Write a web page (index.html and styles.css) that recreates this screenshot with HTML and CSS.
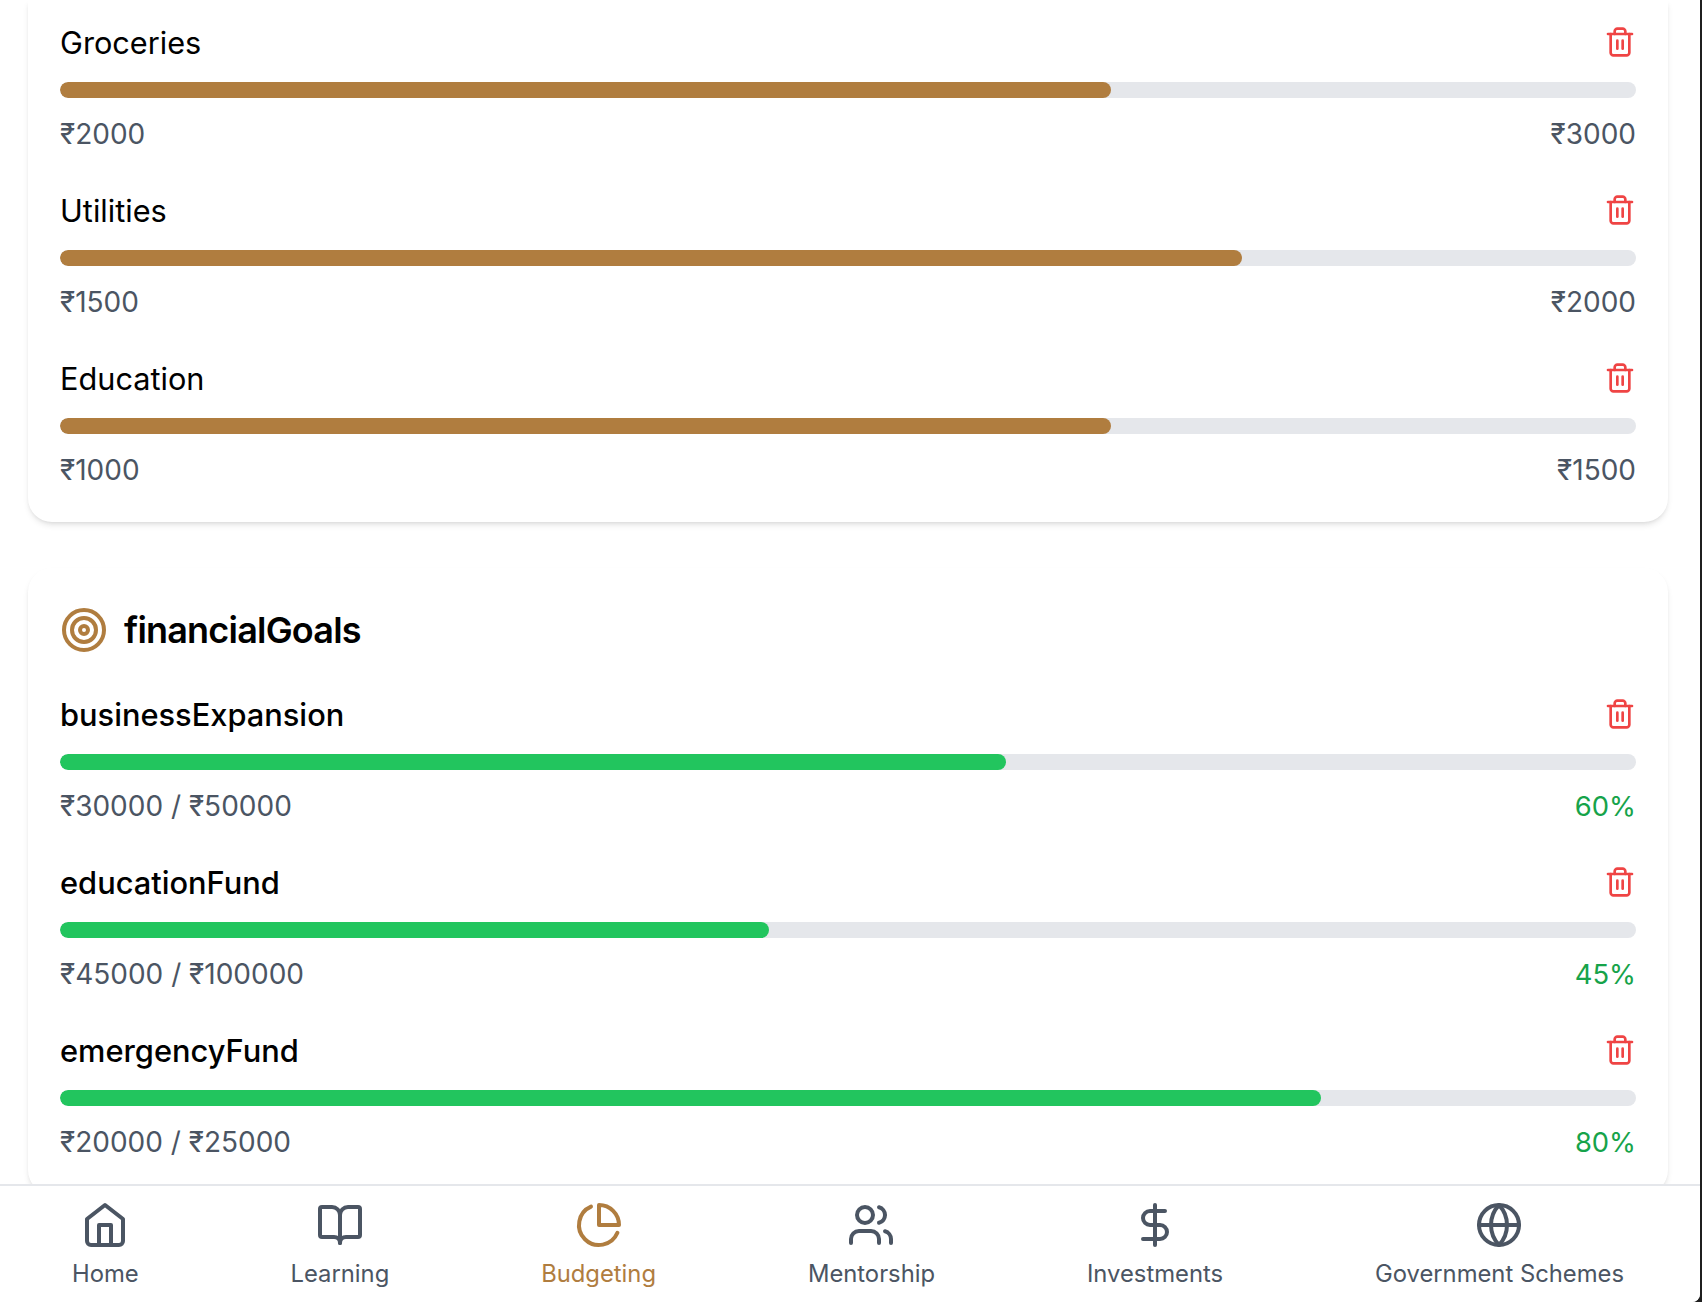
FILE: index.html
```html
<!DOCTYPE html>
<html lang="en">
<head>
    <meta charset="UTF-8">
    <meta name="viewport" content="width=device-width, initial-scale=1.0">
    <title>Budgeting</title>
    <link rel="stylesheet" href="styles.css">
</head>
<body>
    <svg class="sprite" aria-hidden="true">
        <symbol id="trash" viewBox="0 0 24 24"><path d="M3 6h18"/><path d="M19 6v14c0 1-1 2-2 2H7c-1 0-2-1-2-2V6"/><path d="M8 6V4c0-1 1-2 2-2h4c1 0 2 1 2 2v2"/><line x1="10" y1="11" x2="10" y2="17"/><line x1="14" y1="11" x2="14" y2="17"/></symbol>
    </svg>

    <div class="app">
        <main class="content">
            <section class="card card-top">
                <div class="item">
                    <div class="item-head"><span class="item-name">Groceries</span><svg class="trash"><use href="#trash"/></svg></div>
                    <div class="track"><div class="fill fill-brown" style="width: 66.67%"></div></div>
                    <div class="item-foot"><span>₹2000</span><span>₹3000</span></div>
                </div>
                <div class="item">
                    <div class="item-head"><span class="item-name">Utilities</span><svg class="trash"><use href="#trash"/></svg></div>
                    <div class="track"><div class="fill fill-brown" style="width: 75%"></div></div>
                    <div class="item-foot"><span>₹1500</span><span>₹2000</span></div>
                </div>
                <div class="item">
                    <div class="item-head"><span class="item-name">Education</span><svg class="trash"><use href="#trash"/></svg></div>
                    <div class="track"><div class="fill fill-brown" style="width: 66.67%"></div></div>
                    <div class="item-foot"><span>₹1000</span><span>₹1500</span></div>
                </div>
            </section>

            <section class="card">
                <h2 class="card-title">
                    <svg class="title-icon" viewBox="0 0 24 24"><circle cx="12" cy="12" r="10"/><circle cx="12" cy="12" r="6"/><circle cx="12" cy="12" r="2"/></svg>
                    financialGoals
                </h2>
                <div class="item">
                    <div class="item-head"><span class="item-name goal">businessExpansion</span><svg class="trash"><use href="#trash"/></svg></div>
                    <div class="track"><div class="fill fill-green" style="width: 60%"></div></div>
                    <div class="item-foot"><span>₹30000 / ₹50000</span><span class="percent">60%</span></div>
                </div>
                <div class="item">
                    <div class="item-head"><span class="item-name goal">educationFund</span><svg class="trash"><use href="#trash"/></svg></div>
                    <div class="track"><div class="fill fill-green" style="width: 45%"></div></div>
                    <div class="item-foot"><span>₹45000 / ₹100000</span><span class="percent">45%</span></div>
                </div>
                <div class="item">
                    <div class="item-head"><span class="item-name goal">emergencyFund</span><svg class="trash"><use href="#trash"/></svg></div>
                    <div class="track"><div class="fill fill-green" style="width: 80%"></div></div>
                    <div class="item-foot"><span>₹20000 / ₹25000</span><span class="percent">80%</span></div>
                </div>
            </section>
        </main>

        <nav class="bottom-nav">
            <a class="nav-item">
                <svg class="nav-icon" viewBox="0 0 24 24"><path d="m3 9 9-7 9 7v11a2 2 0 0 1-2 2H5a2 2 0 0 1-2-2z"/><polyline points="9 22 9 12 15 12 15 22"/></svg>
                <span>Home</span>
            </a>
            <a class="nav-item">
                <svg class="nav-icon" viewBox="0 0 24 24"><path d="M12 7v14"/><path d="M3 18a1 1 0 0 1-1-1V4a1 1 0 0 1 1-1h5a4 4 0 0 1 4 4 4 4 0 0 1 4-4h5a1 1 0 0 1 1 1v13a1 1 0 0 1-1 1h-6a3 3 0 0 0-3 3 3 3 0 0 0-3-3z"/></svg>
                <span>Learning</span>
            </a>
            <a class="nav-item active">
                <svg class="nav-icon" viewBox="0 0 24 24"><path d="M21.21 15.89A10 10 0 1 1 8 2.83"/><path d="M22 12A10 10 0 0 0 12 2v10z"/></svg>
                <span>Budgeting</span>
            </a>
            <a class="nav-item">
                <svg class="nav-icon" viewBox="0 0 24 24"><path d="M16 21v-2a4 4 0 0 0-4-4H6a4 4 0 0 0-4 4v2"/><circle cx="9" cy="7" r="4"/><path d="M22 21v-2a4 4 0 0 0-3-3.87"/><path d="M16 3.13a4 4 0 0 1 0 7.75"/></svg>
                <span>Mentorship</span>
            </a>
            <a class="nav-item">
                <svg class="nav-icon" viewBox="0 0 24 24"><line x1="12" y1="2" x2="12" y2="22"/><path d="M17 5H9.5a3.5 3.5 0 0 0 0 7h5a3.5 3.5 0 0 1 0 7H6"/></svg>
                <span>Investments</span>
            </a>
            <a class="nav-item">
                <svg class="nav-icon" viewBox="0 0 24 24"><circle cx="12" cy="12" r="10"/><path d="M12 2a14.5 14.5 0 0 0 0 20 14.5 14.5 0 0 0 0-20"/><path d="M2 12h20"/></svg>
                <span>Government Schemes</span>
            </a>
        </nav>
    </div>
</body>
</html>
```

FILE: styles.css
```css
* {
    box-sizing: border-box;
}

body {
    margin: 0;
    font-family: Inter, "Noto Sans", sans-serif;
    background-color: #1f1f1f;
    color: #000;
}

.sprite {
    display: none;
}

svg {
    fill: none;
    stroke: currentColor;
    stroke-width: 2;
    stroke-linecap: round;
    stroke-linejoin: round;
}

/* the 2px dark strip at the right is the body showing through */
.app {
    height: 100vh;
    margin-right: 2px;
    display: flex;
    flex-direction: column;
    overflow: hidden;
    background-color: #fff;
    border-bottom-right-radius: 8px;
}

.content {
    flex: 1;
    min-height: 0;
    overflow: hidden;
    padding: 0 32px 0 28px;
    display: flex;
    flex-direction: column;
    gap: 46px;
}

.card {
    flex-shrink: 0;
    background-color: #fff;
    border-radius: 24px;
    padding: 32px;
    box-shadow: 0 4px 6px -1px rgba(0, 0, 0, 0.1), 0 2px 4px -2px rgba(0, 0, 0, 0.1);
}

.card-top {
    padding-top: 22px;
    border-radius: 0 0 24px 24px;
}

.card-title {
    display: flex;
    align-items: center;
    gap: 16px;
    margin: 0 0 34px;
    font-size: 36px;
    line-height: 60px;
    font-weight: 600;
    letter-spacing: -0.8px;
}

.title-icon {
    width: 48px;
    height: 48px;
    color: #b07d3f;
}

.item {
    margin-bottom: 36px;
}

.item:last-child {
    margin-bottom: 0;
}

.item-head {
    display: flex;
    justify-content: space-between;
    align-items: center;
    height: 40px;
    margin-bottom: 20px;
}

.item-name {
    font-size: 30.7px;
}

.goal {
    font-size: 30.8px;
    font-weight: 500;
}

.trash {
    width: 32px;
    height: 32px;
    color: #ef4444;
}

.track {
    height: 16px;
    background-color: #e5e7eb;
    border-radius: 999px;
    overflow: hidden;
}

.fill {
    height: 100%;
    border-radius: 999px;
}

.fill-brown {
    background-color: #b07d3f;
}

.fill-green {
    background-color: #22c55e;
}

.item-foot {
    display: flex;
    justify-content: space-between;
    margin-top: 16px;
    font-size: 28px;
    line-height: 40px;
    color: #4b5563;
}

.percent {
    font-size: 27.4px;
    color: #16a34a;
}

.bottom-nav {
    flex-shrink: 0;
    height: 118px;
    display: flex;
    justify-content: space-between;
    background-color: #fff;
    border-top: 2px solid #e5e7eb;
    padding: 15px 76px 0 72px;
}

.nav-item {
    display: flex;
    flex-direction: column;
    align-items: center;
    gap: 9px;
    font-size: 23.8px;
    line-height: 32px;
    color: #4b5563;
}

.nav-item.active {
    color: #b07d3f;
}

.nav-icon {
    width: 48px;
    height: 48px;
}
```
